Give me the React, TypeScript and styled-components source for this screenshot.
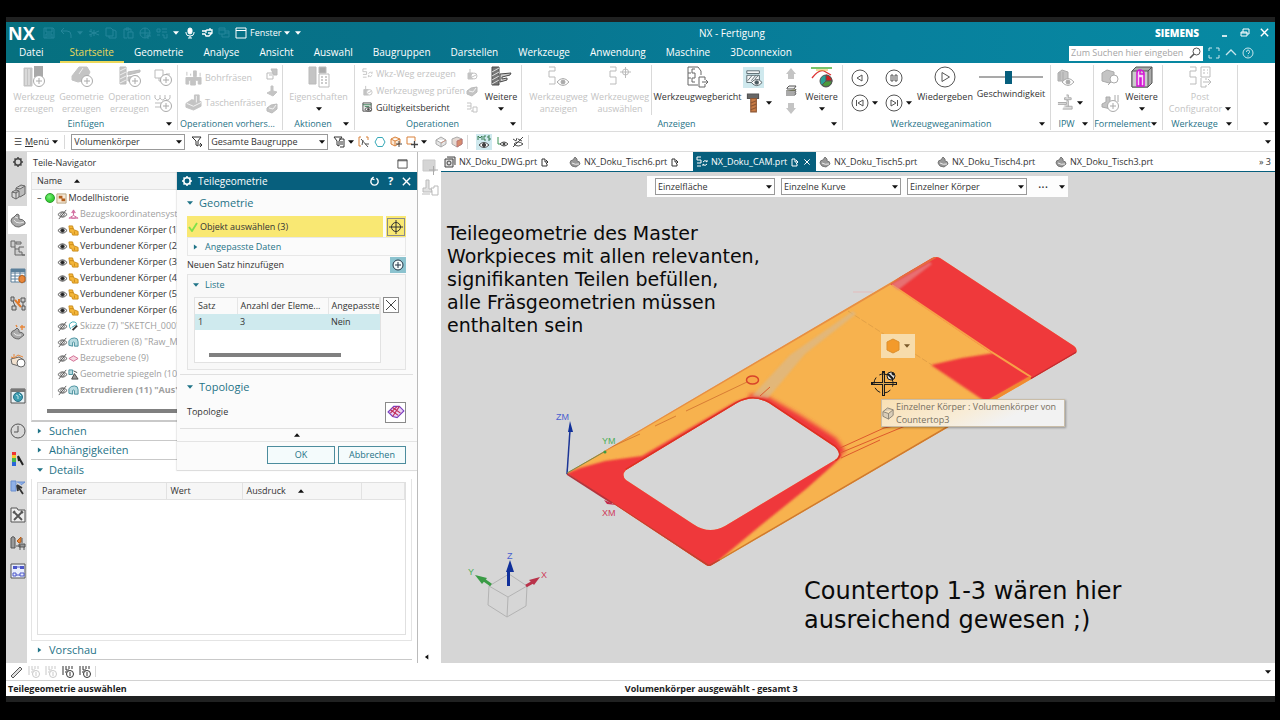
import React from "react";
import styled, { createGlobalStyle, css } from "styled-components";

const C = {
  deep: "#075f7d",
  link: "#1f7387",
  ink: "#333",
  dim: "#c3c3c3",
  line: "#d9d9d9",
};

const Global = createGlobalStyle`
  * { box-sizing: border-box; }
  body { margin: 0; background: #000; }
  button, input, select, table { font: inherit; color: inherit; }
  button { border: 0; padding: 0; margin: 0; background: none; cursor: pointer; }
`;

/* ---------- icons ---------- */

type Glyph = { box: number; art: React.ReactNode };
const plus = (x: number, y: number, c: string) => (
  <g stroke={c} fill="#fff">
    <circle cx={x} cy={y} r="5.5" />
    <path d={`M${x - 3} ${y}h6M${x} ${y - 3}v6`} />
  </g>
);
const eye = (x: number, y: number, c: string) => (
  <g stroke={c} fill="#fff">
    <path d={`M${x - 6} ${y}q6 -7 12 0q-6 7 -12 0z`} />
    <circle cx={x} cy={y} r="2" fill={c} />
  </g>
);
const D = "#c4c4c4";
const K = "#4a4a4a";

const glyphs: Record<string, Glyph> = {
  save: { box: 12, art: <path d="M1 1h9l1 1v9H1zM3 1v4h6V1M3 11V7h6v4M4 9h4" /> },
  undo: { box: 12, art: <path d="M4 1L1 4l3 3M1 4h6q4 0 4 4v3" /> },
  cut: { box: 12, art: <path d="M1 4l10 4M1 8l10-4M3 2v3M3 7v3M6 3v6" /> },
  copy: { box: 12, art: <path d="M1 1h5l2 2v6H1zM4 9v2h7V4L9 3H8" /> },
  paste: { box: 12, art: <path d="M2 2h7v3M2 2v9h3M4 1h3v2H4zM6 5h5v6H6z" /> },
  globe: { box: 12, art: <path d="M6 1a5 5 0 100 10A5 5 0 006 1zM1 6h10M6 1v10M9 7v5M7 9h5" /> },
  dots: { box: 12, art: <path d="M1 2h3v3H1zM6 2h5M6 5h5M1 8h3M6 8h2v3h3V7" /> },
  mic: { box: 12, art: <g><rect x="4" y="1" width="4" height="6" rx="2" fill="currentColor" /><path d="M2 5v1q0 3 4 3t4-3V5M6 9v2M4 11h4" /></g> },
  hand: { box: 12, art: <path strokeWidth="1.300" d="M1 4h3l2-1h5v3H7M5 6V4M11 6L8 9H5L4 7H1M9 1v2" /> },
  wins: { box: 12, art: <path d="M1 1h6v6H1zM4 7v3h7V4H7M1 3h6M7 6h4" /> },
  win: { box: 12, art: <path d="M1 1h10v10H1zM1 3.5h10" /> },
  min: { box: 12, art: <path strokeWidth="1.6" d="M3 9h5" /> },
  restore: { box: 12, art: <path d="M2 5h6v4H2zM4 5V2h6v5H8M2 6h6" /> },
  close: { box: 12, art: <path strokeWidth="1.5" d="M2 2l8 8M10 2l-8 8" /> },
  search: { box: 12, art: <g><circle cx="7.500" cy="4.500" r="3.500" /><path strokeWidth="1.6" d="M5 7l-4 4" /></g> },
  full: { box: 12, art: <path d="M1 4V1h3M8 1h3v3M11 8v3H8M4 11H1V8" /> },
  up: { box: 12, art: <path strokeWidth="1.3" d="M1 8l5-5 5 5" /> },
  help: { box: 12, art: <g><circle cx="6" cy="6" r="5" /><path d="M4.500 5q0-2 1.500-2t1.500 1.500T6 7M6 8.500v1" /></g> },
  tool: { box: 22, art: <g><path fill={D} stroke={D} d="M1 2h8v18H1z" /><path fill="#a9a9a9" stroke="none" d="M11 0h9v11h-9z" /><path stroke="#eee" d="M3 3v16M6 3v16" />{plus(16, 15, "#aaa")}</g> },
  geom: { box: 22, art: <g stroke={D}><path fill={D} d="M1 10L8 1h8l3 5-4 8-8 2-6-2z" /><path stroke="#eee" d="M8 8l4-6" />{plus(16, 15, "#aaa")}</g> },
  oper: { box: 22, art: <g stroke="#bbb"><path fill={D} d="M1 1h6v17H1z" /><path fill={D} d="M9 6l12-2v2L9 9zM9 11l10-1v2l-6 1v2H9z" /><path stroke="#eee" d="M1 5l6-3M1 9l6-3M1 13l6-3M1 17l6-3" />{plus(16, 15, "#aaa")}</g> },
  sqPlus: { box: 18, art: <g stroke="#bbb"><path d="M1 1h8v8H1zM5 9v3h7V5h4" />{plus(12, 11, "#aaa")}</g> },
  rowPlus: { box: 18, art: <g stroke="#bbb"><path d="M1 4q3 4 5 0q3 4 5 0q3 4 5 0M1 9h15M1 13h6M1 1v3M6 1v3M11 1v3M16 1v3" />{plus(12, 12, "#aaa")}</g> },
  drill: { box: 18, art: <g stroke={D} fill={D}><path d="M1 9h16v7h-3v-4h-3v5H6v-5H4v4H1zM9 2h3v6H9z" /><path d="M2 3v4M6 5v2M16 4v4" /></g> },
  pocket: { box: 18, art: <g stroke={D} fill={D}><path d="M1 10l6-4 10 2v5l-8 4-8-3zM10 1h5v7l-5 2z" /><path stroke="#f4f4f4" d="M2 10l7 3 8-4M12 2v7" /></g> },
  mini1: { box: 12, art: <g stroke="#bbb"><path fill={D} d="M5 1h6v6H8z" /><path d="M1 5h6v6H1zM3 7h3" /></g> },
  mini2: { box: 12, art: <path fill={D} stroke={D} d="M5 1h2v5l4 1-4 4-6-3 4-2z" /> },
  mini3: { box: 12, art: <g stroke="#bbb"><path fill={D} d="M1 6l4-3 6-1v5l-5 4-5-2z" /><path stroke="#f2f2f2" d="M3 6l4 1 3-4" /></g> },
  props: { box: 22, art: <g stroke="#bbb"><path fill={D} d="M1 1h7v17H1z" /><path fill="#aaa" d="M11 1h7v6h-7z" /><path fill="#fff" d="M11 8h10v13H11z" /><path stroke="#999" d="M13 11h2M17 11h2M13 14h2M17 14h2M13 17h2M17 17h2" /></g> },
  path12: { box: 12, art: <path d="M5 1H1v3h4v3H1M1 10h4M7 6q2-3 4 0M11 6V4M11 8q-2 3-4 0M7 8v2" /> },
  pathBox: { box: 12, art: <path d="M1 1h4v3H1M5 4v3H1M5 9h2M7 5h4v5H7z" /> },
  check12: { box: 12, art: <g><path fill="currentColor" d="M2 5h5v6H2zM4 1v4" /><circle cx="8" cy="8" r="3" fill="#fff" /><path d="M6 9l4-2" /></g> },
  report: { box: 12, art: <g stroke={K}><path fill="#eee" d="M1 1h9v9H1z" /><path stroke="#387d53" d="M1 3h9M3 5h5" /><path fill="#fff" d="M3 8q4-4 8 0q-4 4-8 0z" /><circle cx="7" cy="8" r="1" fill={K} /></g> },
  mill: { box: 22, art: <g stroke={K}><path fill="#777" d="M2 1h7v18H2z" /><path stroke="#ddd" d="M2 6l7-4M2 10l7-4M2 14l7-4M2 18l7-4" /><path fill="#ccc" d="M10 8l11-1-1 2-8 2v2l5-1v2l-7 2z" /></g> },
  pathEye: { box: 22, art: <g stroke="#bbb"><path d="M1 1h6v4H1v6h6v7H1" />{eye(15, 16, "#aaa")}</g> },
  pathPick: { box: 22, art: <g stroke="#bbb"><path d="M1 1h6v4H1v6h6v7H1M11 6h11M16.500 1v11" /><circle cx="16.500" cy="6" r="3" /></g> },
  pathDoc: { box: 22, art: <g stroke="#666"><path d="M1 1h10l3 4v4M1 1v18h10M5 3v4h3v5H5M5 12v4h3M4 7H1M4 12H1M8 3H5" /><path fill="#fff" d="M12 11v10h6v-3M12 11h6v3M15 16h6M19 14l2 2-2 2" /></g> },
  show: { box: 20, art: <g stroke="#55656b"><path fill="#f4f7f8" d="M2 2h14v3H2z" /><path fill="#f4f7f8" d="M2 7h14v8H2z" /><path d="M3 13l5-6M7 13l5-6M11 11l4-4" />{eye(13, 15, "#4b5a60")}</g> },
  bolt: { box: 18, art: <g><path fill="#666" stroke="#555" d="M4 1h10v4H4z" /><path fill="#c87b45" stroke="#8d5632" d="M7 5h5v12H7z" /><path stroke="#8d5632" d="M7 9l5-2M7 12l5-2M7 15l5-2" /></g> },
  arrUp: { box: 12, art: <path fill={D} stroke="none" d="M6 0l5 6H9v5H3V6H1z" /> },
  arrDn: { box: 12, art: <path fill={D} stroke="none" d="M6 12L1 6h2V1h6v5h2z" /> },
  layers: { box: 12, art: <g stroke="#555"><path fill="#eee" d="M2 3l2-2h7l-2 3H2z" /><path fill="#8a8f60" d="M1 6h9l1-2" /><path d="M1 8h9l1-2M1 10h9l1-2" /></g> },
  pie: { box: 22, art: <g><path stroke="#57b545" strokeWidth="1.6" d="M0 2h21" /><path stroke="#d33" strokeWidth="1.300" d="M1 12q7-9 12-7l7 4" /><path stroke="#e3b93b" d="M5 4h12" /><circle cx="15" cy="15" r="6" fill="#2aa197" stroke="#555" /><path fill="#c22" stroke="#555" d="M15 15V9a6 6 0 016 6z" /><path fill="#4a9a3c" stroke="#555" d="M15 15h6a6 6 0 01-10 4z" /></g> },
  back: { box: 18, art: <g stroke="#555"><circle cx="9" cy="9" r="8" /><path d="M11 6v6L6 9z" /></g> },
  first: { box: 18, art: <g stroke="#555"><circle cx="9" cy="9" r="8" /><path d="M12 6v6L7 9zM5.500 6v6" /></g> },
  pause: { box: 18, art: <g stroke="#555"><circle cx="9" cy="9" r="8" /><path d="M6 6h2v6H6zM10 6h2v6h-2z" /></g> },
  last: { box: 18, art: <g stroke="#555"><circle cx="9" cy="9" r="8" /><path d="M6 6v6l5-3zM12.500 6v6" /></g> },
  play: { box: 22, art: <g stroke="#555"><circle cx="11" cy="11" r="10" /><path d="M8 6.500v9l7.500-4.500z" /></g> },
  ipw1: { box: 18, art: <g stroke="#aaa"><path fill={D} d="M1 4l4-3 6 2v9H1z" /><path d="M3 3v8M6 3v8" />{eye(11, 13, "#aaa")}</g> },
  ipw2: { box: 18, art: <path stroke="#aaa" fill="#ddd" d="M10 1h2v3h3v2H8V4h2M1 9h9v2H1M10 7h2v6h4v3H6M9 13h4" /> },
  form1: { box: 18, art: <g stroke="#aaa"><path fill={D} d="M1 4l5-3 7 2v7l-5 4-7-2z" /><circle cx="13" cy="10" r="4" fill="#fff" /><path d="M10 13l-3 3" /></g> },
  form2: { box: 18, art: <g stroke="#aaa"><path fill={D} d="M1 10l4-2V3h4v6l4 2-3 4-9-2zM14 1v7M17 1v7" />{plus(12, 12, "#aaa")}</g> },
  slot: { box: 22, art: <g stroke="#555"><path fill="#aaa" d="M1 5l4-4h16v16l-4 4H1z" /><path fill="#ccc" d="M1 5h16v16H1z" /><path d="M17 5l4-4" /><path fill="#f8d7f8" stroke="#d413d4" strokeWidth="1.500" d="M6 20V7q0-3 3-3t4 3v13h-3v-8H9v8zM9 4V8h4" /></g> },
  post: { box: 22, art: <g stroke="#bbb"><path d="M1 1h6v4H1v6h6v7H1M12 1h9v10h-9zM14 4h2M18 4h1M14 7h2M18 7h1M12 12v9h5v-2M14 16h8M19 13l3 3-3 3M17 12v2" /></g> },
  funnel: { box: 12, art: <path d="M1 1h9L7 5v5L5 9V5zM8 9h3M9 7l2 2-2 2" /> },
  funnel2: { box: 12, art: <path d="M1 1h8L6 5v5L4 9V5zM6 3h5v8H7M7 6h3M7 8h3" /> },
  snap: { box: 12, art: <g><path stroke="#d9813a" d="M3 1H1v9h2M8 1h2v3" /><path stroke="#555" d="M3 3l7 8M4 9l1-5M7 8h4" /></g> },
  hex: { box: 12, art: <path stroke="#37a9b8" d="M3.500 1.500h5L11 6l-2.500 4.500h-5L1 6z" /> },
  cubeO: { box: 12, art: <g><path stroke="#d9813a" fill="#fbe9d6" d="M1 3l4-2 5 2v4l-5 3-4-2zM1 3l4 2 5-2M5 5v5" /><path stroke="#444" d="M6 8h6M9 5v6" /></g> },
  rectO: { box: 12, art: <g><path stroke="#d9813a" d="M9 5V1H1v7h5" /><path stroke="#444" strokeWidth="1.300" d="M5 8.500h7M8.500 5v7" /></g> },
  cubeG: { box: 12, art: <g><path stroke="#aaa" fill="#e5e5e5" d="M1 4l5-3 5 3v4l-5 3-5-3zM1 4l5 3 5-3M6 7v4" /><path stroke="#c98" d="M6 7l5-3" /></g> },
  cubeR: { box: 12, art: <g><path stroke="#aaa" fill="#e5d9d2" d="M1 3l5-2 5 2v5l-5 3-5-3z" /><path fill="#d88d6d" stroke="#b77" d="M6 5l5-2v5l-5 3z" /></g> },
  mcs: { box: 14, art: <g><path stroke="#387d53" d="M1 5V1l2 2 2-2v4M9 1H7v4h2M13 1h-2v2h2v2h-2" /><path stroke={K} fill="#fff" d="M2 10q5-5 10 0q-5 5-10 0z" /><circle cx="7" cy="10" r="1.500" fill={K} /></g> },
  csEye: { box: 12, art: <g><path stroke="#3c9457" d="M2 1v7h4" /><path stroke={K} fill="#fff" d="M4 8q4-4 8 0q-4 4-8 0z" /><circle cx="8" cy="8" r="1" fill={K} /></g> },
  csOff: { box: 12, art: <path stroke={K} d="M1 11L11 1M1 3l3 2 1-3M2 8q4-4 9 0q-5 4-9 0M6 3l4 2" /> },
  gear: { box: 12, art: <g strokeWidth="1.500"><circle cx="6" cy="6" r="3.200" /><path strokeWidth="1.500" d="M6 1v2M6 9v2M1 6h2M9 6h2M2.500 2.500l1 1M8.500 8.500l1 1M9.500 2.500l-1 1M3.500 8.500l-1 1" /></g> },
  asm: { box: 16, art: <g stroke="#666"><path fill="#bbb" d="M6 4l5-3 4 1v8l-5 3-4-2z" /><path fill="#d6d6d6" d="M2 8l4-2 3 1v6l-3 2-4-2zM2 8l4 1 3-2M6 9v6M6 4l4 1 5-3" /></g> },
  part: { box: 16, art: <g stroke="#666"><path fill="#a9a9a9" d="M1 9q0-3 3-4l3-3 2 1v4q4 0 6 3v2l-6 3q-6 0-8-6z" /><path stroke="#e6e6e6" d="M4 8q1 3 6 3l4-1M5 5l3 1" /></g> },
  opnav: { box: 16, art: <path stroke="#666" fill="#ccc" d="M1 1h4v6H1zM6 2h5v2H6zM5 9h4v3h3v3h3M5 7v8h10M9 9V7h5" /> },
  tableO: { box: 16, art: <g><path fill="#fff" stroke="#5a7f9a" d="M1 1h14v13H1zM1 5h14M1 8h14M1 11h14M5 1v13M10 1v13" /><path fill="#5a7f9a" stroke="none" d="M1 1h14v3H1z" /><path fill="#e8873a" stroke="#b35f1d" d="M9 9l3-2 3 2v4l-3 2-3-2z" /></g> },
  links: { box: 16, art: <g stroke="#555"><path fill="#ccc" d="M1 1h3v4H1zM2 10h4v4H2zM11 2h4v4h-4zM12 10h3v4h-3zM3 5l2 5M13 6v4" /><path stroke="#e27a2a" strokeWidth="2" d="M5 4l6 7M9 3v4" /></g> },
  partStar: { box: 16, art: <g stroke="#666"><path fill="#a9a9a9" d="M1 10q0-3 4-4l2-2 2 2v2q4 0 5 3l-5 4q-6 0-8-5z" /><path stroke="#eee" d="M4 9q1 3 7 2" /><path stroke="#e8873a" strokeWidth="1.400" d="M10 3h5M12 1v5M6 1l1 2" /></g> },
  cubeStar: { box: 16, art: <g stroke="#666"><path fill="#f3e2cf" d="M1 7l8-2 5 3-5 6-7-2z" /><path stroke="#e8873a" d="M1 5l3 1 4-3 5 2M4 2v3" /><circle cx="11" cy="11" r="4" fill="#fff" /></g> },
  web: { box: 16, art: <g><path fill="#e8f1f4" stroke="#555" d="M1 1h14v14H1z" /><path fill="#777" stroke="none" d="M1 1h14v3H1z" /><circle cx="8" cy="9" r="4.500" fill="#3c9db1" stroke="#2a6f86" /><path stroke="#bfe3e8" d="M6 7l2 1v3M9 6l2 2" /></g> },
  clock: { box: 16, art: <g stroke="#555"><circle cx="8" cy="8" r="7" /><path d="M8 3v6H4" /></g> },
  ramp: { box: 16, art: <g stroke="none"><path fill="#e33" d="M2 1h4v3H2z" /><path fill="#f5c52d" d="M2 4h4v3H2z" /><path fill="#46b84a" d="M2 7h4v4H2z" /><path fill="#2a66d8" d="M2 11h4v4H2z" /><path stroke="#222" strokeWidth="2" d="M8 5l5 9M8 5l1 5" /></g> },
  blue: { box: 16, art: <g><path fill="#8fb0e6" stroke="#6b8fd0" d="M1 2h5v10H1zM7 3h8l-4 3" /><path stroke="#333" strokeWidth="1.800" d="M7 6l6 9M7 6l1 6M7 6l5 3" /></g> },
  wrench: { box: 16, art: <g stroke="#555"><path fill="#eee" d="M1 1h6l1 2h7v12H1z" /><path strokeWidth="1.800" d="M4 5l8 8M12 5l-8 8M3 6l2-2M11 4l2 2" /></g> },
  plant: { box: 16, art: <g stroke="#555"><path fill="#999" d="M1 3q2-3 4 0v10H1zM9 9h6v3H9zM10 12v3M14 12v3" /><path fill="#e8873a" stroke="#b35f1d" d="M7 6l4-4v5l-2 1z" /><path d="M6 11h5M12 3v5" /></g> },
  flow: { box: 16, art: <g><path fill="#e9eefc" stroke="#555" d="M1 1h14v14H1z" /><path fill="#4c57c9" stroke="none" d="M3 3h4v3H3zM10 3h4v3h-4z" /><path stroke="#4c57c9" d="M7 4h3M3 10h3v3H3zM6 12h4M10 10h4v3h-4z" /></g> },
  eyeOn: { box: 12, art: <g stroke="#444"><path d="M1 6q5-6 10 0q-5 6-10 0z" /><circle cx="6" cy="6" r="2" fill="#222" /></g> },
  eyeOff: { box: 12, art: <g stroke="#555"><path d="M1 6q5-6 10 0q-5 6-10 0z" /><circle cx="6" cy="6" r="2" /><path d="M2 11l8-10" /></g> },
  csys: { box: 12, art: <path stroke="#d0669a" d="M6 1v6L1 10h10L6 7M6 1L4 4h4zM4 8v2h4V8" /> },
  joined: { box: 12, art: <g stroke="#c98a17"><path fill="#f5b73a" d="M1 1h4l1 4 5 2v4H5L4 8H2z" /><path d="M2 4h4M7 7v3" /></g> },
  sketch: { box: 12, art: <g><path stroke="#2aa3b0" d="M3 9Q-1 3 5 1q5 0 4 3L4 7" /><path stroke="#333" strokeWidth="2" d="M10 5l-5 5" /></g> },
  extrude: { box: 12, art: <path stroke="#3f8b99" fill="#b8dbe1" d="M1 9V4q2-3 6-3t4 4v5H7V6Q6 5 5 6v4z" /> },
  plane: { box: 12, art: <path stroke="#d0668c" fill="#f6d5e0" d="M1 6l5-3 5 3-5 3z" /> },
  mirror: { box: 12, art: <g><path stroke="#3f8b99" fill="#b8dbe1" d="M1 1h4v5H1z" /><path stroke="#444" fill="#999" d="M4 11l3-6 4 6zM6 2l4 2" /></g> },
  history: { box: 12, art: <g><path stroke="#b5a07b" fill="#f6e9d7" d="M1 1h10v10H1z" /><path stroke="none" fill="#b35f1d" d="M3 3h4v3H3zM6 6h4v3H6z" /></g> },
  refresh: { box: 12, art: <path strokeWidth="1.500" d="M4 2.500a4 4 0 104 0M5 1L3 3l3 1" /> },
  target: { box: 16, art: <g><circle cx="8" cy="8" r="4.500" /><path d="M8 1v14M1 8h14" /></g> },
  addRing: { box: 14, art: <g stroke="#234"><circle cx="7" cy="7" r="5" fill="#f5fbfc" /><path d="M7 4v6M4 7h6" /></g> },
  cross: { box: 14, art: <path stroke="#444" d="M2 2l10 10M12 2L2 12" /> },
  tick: { box: 10, art: <path stroke="#7ee04a" strokeWidth="1.800" d="M1 5l3 4 5-8" /> },
  topo: { box: 16, art: <g><path fill="#e9d3f5" stroke="#7b3fc0" d="M1 8l5-5h5l4 4-6 6-4-1z" /><path stroke="#c02b55" d="M3 6l7 5M5 4l7 5M5 12l6-9M3 9l6-6" /></g> },
  maxi: { box: 12, art: <path stroke={K} d="M1 2h10v9H1zM1 3h10" /> },
  drawTab: { box: 12, art: <g stroke="#444"><path fill="#ddd" d="M1 3h8v8H1zM3 1h8v8" /><circle cx="5" cy="7" r="2" /></g> },
  partTab: { box: 12, art: <g stroke="#777"><path fill="#999" d="M1 7q0-3 3-3l2-3 2 2v2q3 0 3 3l-4 3Q2 11 1 7z" /><path stroke="#eee" d="M3 7q3 2 7 1" /></g> },
  mark: { box: 10, art: <path d="M5 2H2v7h5V7M5 2v3h3M6 3l2 2-2 2" /> },
  ghostA: { box: 18, art: <g stroke="#c9c9c9"><path fill="#d5d5d5" d="M2 2h12v11H2z" /><path stroke="#aaa" d="M8 12h9M12.500 8v9" /></g> },
  ghostB: { box: 18, art: <g fill="#e2e2e2" stroke="#bbb"><path d="M5 1h3v9h3v3H2V9h3zM1 15h8" /><path fill="#fff" d="M10 9h3v-2h4v9h-6v-4z" /></g> },
  ruler: { box: 14, art: <path stroke="#555" fill="#ddd" d="M1 11l9-9 2 2-9 9z" /> },
  rec: { box: 14, art: <g><path d="M2 1v9M5 1v4M8 1v3M11 1v3M5 5h3M4 7h2" /><circle cx="9" cy="9" r="3.500" fill="#fff" /><path d="M9 7v4" /></g> },
  bodyOrange: { box: 16, art: <path fill="#f39a2b" stroke="#dd8f2c" d="M2 4l6-3 6 3v8l-6 3-6-3z" /> },
  bodyGrey: { box: 14, art: <path fill="#d9cdb8" stroke="#8a8375" d="M1 5l5-4 6 2v6l-5 4-6-3zM1 5l6 2 5-4M7 7v6" /> },
};

const Svg = styled.svg`
  display: block;
  flex: none;
  fill: none;
  stroke: currentColor;
`;
const Icon = ({ n, size }: { n: string; size?: number }) => {
  const g = glyphs[n];
  const s = size ?? g.box;
  return (
    <Svg width={s} height={s} viewBox={`0 0 ${g.box} ${g.box}`} aria-hidden="true">
      {g.art}
    </Svg>
  );
};

const shapes = { down: "M0 1h7L3.500 5z", up: "M0 5h7L3.500 1z", right: "M1 0v6l4-3z", left: "M5 0v6L1 3z" };
const Caret = ({ dir = "down", tone = "#111" }: { dir?: keyof typeof shapes; tone?: string }) => (
  <Svg width="6" height="6" viewBox="0 0 7 6" aria-hidden="true">
    <path d={shapes[dir]} fill={tone} stroke="none" />
  </Svg>
);

/* ---------- frame ---------- */

const Page = styled.div`
  min-height: 100vh;
  display: flex;
  flex-direction: column;
  padding: 17px 5px 18px 6px;
  font: 9px/12px "Open Sans", "Noto Sans", sans-serif;
  color: ${C.ink};
`;
const Strip = styled.div<{ $h: number }>`
  height: ${(p) => p.$h}px;
  background: #202121;
`;
const Shell = styled.div`
  flex: 1;
  display: flex;
  flex-direction: column;
  background: #fff;
`;
const Header = styled.header`
  background: linear-gradient(90deg, #06707f 0%, #07728a 30%, #08809d 70%, #078aa3 100%);
  color: #fff;
`;
const TitleBar = styled.div`
  display: flex;
  align-items: center;
  height: 21px;
`;
const Quick = styled.div`
  display: flex;
  align-items: center;
  width: 303px;
  gap: 5px;
`;
const Brand = styled.strong`
  width: 32px;
  padding-left: 2px;
  font-size: 18px;
  line-height: 20px;
`;
const QuickButton = styled.button<{ $faint?: boolean }>`
  display: flex;
  align-items: center;
  gap: 3px;
  color: ${(p) => (p.$faint ? "#25869a" : "#fff")};
`;
const TitleText = styled.div`
  flex: 1;
  text-align: center;
  font-size: 10px;
`;
const WindowTools = styled.div`
  display: flex;
  align-items: center;
  gap: 8px;
  width: 120px;
  padding-right: 5px;
`;
const Siemens = styled.strong`
  flex: 1;
  font-size: 10px;
  font-weight: 800;
`;
const TabBar = styled.nav`
  display: flex;
  align-items: stretch;
  height: 20px;
  padding-left: 3px;
`;
const Tab = styled.a<{ $on?: boolean; $wide?: boolean }>`
  padding: 3px 10px 0;
  margin-right: ${(p) => (p.$wide ? 6 : 0)}px;
  font-size: 10px;
  line-height: 13px;
  text-decoration: none;
  color: ${(p) => (p.$on ? "#ecd85a" : "#fff")};
  border-bottom: 2px solid ${(p) => (p.$on ? "#ecd85a" : "transparent")};
`;
const SearchArea = styled.div`
  display: flex;
  align-items: center;
  gap: 5px;
  margin-left: auto;
  padding-right: 21px;
  color: #c9e6ec;
`;
const SearchBox = styled.label`
  display: flex;
  align-items: center;
  width: 134px;
  height: 15px;
  padding: 0 2px;
  background: #fff;
  color: #555;
  input {
    flex: 1;
    min-width: 0;
    border: 0;
    padding: 0;
    outline: 0;
    background: none;
  }
  input::placeholder { color: #a5a5a5; }
`;

/* ---------- ribbon ---------- */

const Ribbon = styled.div`
  display: flex;
  height: 69px;
  padding-top: 2px;
  border-bottom: 1px solid #dcdcdc;
`;
const GroupBox = styled.section<{ $w?: number }>`
  flex: ${(p) => (p.$w ? `0 0 ${p.$w}px` : "1 1 0")};
  display: flex;
  flex-direction: column;
  margin-bottom: 1px;
  border-right: 1px solid ${(p) => (p.$w ? C.line : "transparent")};
`;
const GroupBody = styled.div<{ $pad?: number }>`
  flex: 1;
  display: flex;
  padding-left: ${(p) => p.$pad ?? 0}px;
`;
const GroupFoot = styled.div`
  display: flex;
  align-items: center;
  height: 12px;
  padding-right: 5px;
  color: ${C.link};
  white-space: nowrap;
  span { flex: 1; text-align: center; }
`;
const Group = ({ w, pad, label, arrow = true, children }: { w?: number; pad?: number; label?: string; arrow?: boolean; children?: React.ReactNode }) => (
  <GroupBox $w={w}>
    <GroupBody $pad={pad}>{children}</GroupBody>
    <GroupFoot>
      <span>{label}</span>
      {arrow && <Caret />}
    </GroupFoot>
  </GroupBox>
);
const Big = styled.button<{ $w: number; $off?: boolean }>`
  flex: 0 0 ${(p) => p.$w}px;
  width: ${(p) => p.$w}px;
  display: flex;
  flex-direction: column;
  align-items: center;
  align-self: flex-start;
  gap: 3px;
  padding-top: 1px;
  white-space: nowrap;
  color: ${(p) => (p.$off ? C.dim : C.ink)};
`;
const WithCaret = styled.span`
  display: flex;
  align-items: center;
  gap: 3px;
  height: 12px;
`;
const Stack = styled.div<{ $w: number; $n: 2 | 3 }>`
  flex: 0 0 ${(p) => p.$w}px;
  display: grid;
  grid-template-rows: ${(p) => (p.$n === 2 ? "25px 25px" : "17px 17px 17px")};
  align-items: center;
`;
const Small = styled.button<{ $off?: boolean }>`
  display: flex;
  align-items: center;
  gap: 3px;
  height: 17px;
  white-space: nowrap;
  color: ${(p) => (p.$off ? C.dim : C.ink)};
`;
const Lit = styled.span<{ $s: number }>`
  display: grid;
  place-items: center;
  width: ${(p) => p.$s}px;
  height: ${(p) => p.$s}px;
  background: #cfe9ee;
`;
const Rule = styled.i<{ $h: number }>`
  width: 1px;
  height: ${(p) => p.$h}px;
  background: ${C.line};
`;
const Speed = styled.label`
  display: flex;
  flex-direction: column;
  align-items: center;
  gap: 4px;
  width: 74px;
  padding-top: 5px;
  input {
    appearance: none;
    width: 64px;
    height: 14px;
    margin: 0;
    background: linear-gradient(#a9a9a9, #a9a9a9) center / 100% 2px no-repeat;
  }
  input::-webkit-slider-thumb {
    appearance: none;
    width: 7px;
    height: 13px;
    background: ${C.deep};
  }
`;

/* ---------- selection bar ---------- */

const SelectBar = styled.div`
  display: flex;
  align-items: center;
  height: 20px;
  padding: 0 4px 0 8px;
  border-bottom: 1px solid #dcdcdc;
`;
const Tools = styled.div<{ $gap: number; $l?: number }>`
  display: flex;
  align-items: center;
  gap: ${(p) => p.$gap}px;
  margin-left: ${(p) => p.$l ?? 0}px;
  button { display: flex; align-items: center; gap: 3px; }
`;
const Pick = styled.span<{ $w: number; $h: number }>`
  display: grid;
  align-items: center;
  width: ${(p) => p.$w}px;
  select {
    grid-area: 1 / 1;
    appearance: none;
    width: 100%;
    height: ${(p) => p.$h}px;
    padding: 0 2px;
    border: 1px solid #999;
    border-radius: 0;
    background: #fff;
    line-height: 12px;
  }
  svg { grid-area: 1 / 1; justify-self: end; margin-right: 3px; pointer-events: none; }
`;
const Dropdown = ({ w, h = 16, value, label }: { w: number; h?: number; value: string; label: string }) => (
  <Pick $w={w} $h={h}>
    <select aria-label={label} defaultValue={value}>
      <option>{value}</option>
    </select>
    <Caret />
  </Pick>
);
const Push = styled.i`
  margin-left: auto;
`;

/* ---------- work area ---------- */

const Work = styled.main`
  flex: 1;
  display: flex;
  align-items: stretch;
`;
const Rail = styled.nav`
  flex: 0 0 21px;
  background: #d8d8d8;
  color: #444;
`;
const RailButton = styled.button<{ $on?: boolean; $gap?: number; $h?: number }>`
  display: grid;
  place-items: center;
  width: 19px;
  height: ${(p) => p.$h ?? 28}px;
  margin: ${(p) => p.$gap ?? 0}px 0 0 2px;
  background: ${(p) => (p.$on ? "#fff" : "none")};
`;
const Navigator = styled.aside`
  position: relative;
  flex: 0 0 391px;
  display: flex;
  flex-direction: column;
  padding: 0 5px 3px 4px;
  border-right: 1px solid #bbb;
`;
const NavTitle = styled.h2`
  display: flex;
  justify-content: space-between;
  align-items: center;
  height: 20px;
  margin: 0;
  padding: 2px 4px 0 2px;
  font-size: 9px;
  font-weight: 400;
`;
const TreeHead = styled.div`
  display: flex;
  align-items: center;
  gap: 12px;
  height: 18px;
  padding-left: 5px;
  background: #f5f5f5;
  border: 1px solid #e2e2e2;
`;
const Tree = styled.ul`
  margin: 0;
  padding: 0 0 0 5px;
  list-style: none;
  border-left: 1px solid #e2e2e2;
`;
const TreeRow = styled.li<{ $root?: boolean; $off?: boolean; $bold?: boolean }>`
  display: flex;
  align-items: center;
  gap: ${(p) => (p.$root ? 1 : 0)}px;
  height: 16px;
  width: 140px;
  margin-left: ${(p) => (p.$root ? 0 : 15)}px;
  padding-left: ${(p) => (p.$root ? 0 : 4)}px;
  border-left: ${(p) => (p.$root ? "0" : "1px solid #ddd")};
  overflow: hidden;
  white-space: nowrap;
  color: ${(p) => (p.$off ? "#a0a0a0" : C.ink)};
  font-weight: ${(p) => (p.$bold ? 700 : 400)};
  span { margin-left: 1px; }
`;
const Ball = styled.i`
  width: 10px;
  height: 10px;
  margin-left: 2px;
  border-radius: 50%;
  background: radial-gradient(circle at 40% 35%, #7df07d, #35cf35 60%);
  border: 1px solid #2b9a2b;
`;
const HScroll = styled.div`
  height: 24px;
  padding: 11px 0 0 15px;
  border-left: 1px solid #e2e2e2;
  border-bottom: 2px solid #c9c9c9;
  i { display: block; width: 340px; height: 4px; background: #808080; }
`;
const Fold = styled.button<{ $line?: boolean; $pad?: number; $h?: number }>`
  display: flex;
  align-items: center;
  gap: 6px;
  height: ${(p) => p.$h ?? 19}px;
  padding-left: ${(p) => p.$pad ?? 6}px;
  border-bottom: ${(p) => (p.$line ? "1px solid #c9c9c9" : "0")};
  font-size: 11px;
  line-height: 14px;
  color: ${C.link};
  text-align: left;
`;
const DetailBox = styled.div`
  flex: 1;
  display: flex;
  padding: 3px 5px 5px;
  border: 1px solid #e4e4e4;
  border-top: 0;
`;
const DetailFrame = styled.div`
  flex: 1;
  border: 1px solid #e0e0e0;
`;
const DetailTable = styled.table`
  width: 100%;
  border-collapse: collapse;
  table-layout: fixed;
  th {
    height: 16px;
    padding: 0 4px;
    text-align: left;
    font-weight: 400;
    background: #f6f6f6;
    border-right: 1px solid #e2e2e2;
    border-bottom: 1px solid #e2e2e2;
  }
  svg { display: inline; margin-left: 12px; }
`;

/* ---------- dialog ---------- */

const Dialog = styled.section`
  position: absolute;
  top: 20px;
  right: 0;
  width: 240px;
  background: #fbfbfb;
  border-bottom: 1px solid #ddd;
  box-shadow: -1px 0 1px rgba(0, 0, 0, 0.08);
`;
const DialogTitle = styled.header`
  display: flex;
  align-items: center;
  gap: 5px;
  height: 18px;
  padding: 0 5px 0 4px;
  background: ${C.deep};
  color: #fff;
  font-size: 10px;
  h2 { flex: 1; margin: 0; font-size: 10px; font-weight: 400; }
  button { width: 11px; font-weight: 700; font-size: 11px; }
`;
const DialogBody = styled.div<{ $b: number }>`
  display: flex;
  flex-direction: column;
  margin: 0 4px 0 3px;
  padding: 0 7px ${(p) => p.$b}px;
  border-bottom: 1px solid #e0e0e0;
`;
const Chosen = styled.div`
  display: flex;
  gap: 3px;
  height: 21px;
  div { flex: 1; display: flex; align-items: center; gap: 2px; padding-left: 1px; background: #f9e873; }
`;
const SquareButton = styled.button<{ $s: number; $bg?: string; $bd?: string }>`
  display: grid;
  place-items: center;
  width: ${(p) => p.$s}px;
  height: ${(p) => p.$s}px;
  background: ${(p) => p.$bg ?? "#fff"};
  border: 1px solid ${(p) => p.$bd ?? "#8a8a8a"};
`;
const ChosenEnd = styled.span`
  display: grid;
  place-items: center;
  width: 20px;
  background: #f9e873;
`;
const Sub = styled.button<{ $boxed?: boolean }>`
  display: flex;
  align-items: center;
  gap: 6px;
  height: 19px;
  padding-left: 5px;
  color: ${C.link};
  border: ${(p) => (p.$boxed ? "1px solid #e8e8e8" : "0")};
`;
const Line = styled.div<{ $h: number }>`
  display: flex;
  align-items: center;
  justify-content: space-between;
  height: ${(p) => p.$h}px;
`;
const ListBox = styled.div`
  display: flex;
  flex-direction: column;
  height: 96px;
  border: 1px solid #e4e4e4;
  background: #f8f8f8;
`;
const ListRow = styled.div`
  display: flex;
  gap: 2px;
  padding: 3px 6px;
`;
const ListFrame = styled.div`
  width: 188px;
  height: 66px;
  border: 1px solid #e2e2e2;
  background: #fff;
  overflow: hidden;
  i { display: block; width: 132px; height: 4px; margin: 23px 0 0 14px; background: #808080; }
`;
const SetTable = styled.table`
  width: 100%;
  table-layout: fixed;
  border-collapse: collapse;
  th, td { height: 16px; padding: 0 3px; text-align: left; font-weight: 400; white-space: nowrap; overflow: hidden; }
  th { background: #fafafa; border-right: 1px solid #e6e6e6; }
  td { background: #cfeaee; }
`;
const Expander = styled.div`
  display: grid;
  place-items: center;
  height: 12px;
`;
const Footer = styled.footer`
  display: flex;
  justify-content: flex-end;
  gap: 3px;
  padding: 4px 11px 6px;
  border-top: 1px solid #e4e4e4;
`;
const Action = styled.button`
  width: 68px;
  height: 18px;
  border: 1px solid #4c8c9d;
  background: #f4fbfc;
  color: ${C.link};
`;

/* ---------- graphics window ---------- */

const Gutter = styled.div`
  flex: 0 0 23px;
  display: flex;
  flex-direction: column;
  align-items: center;
  gap: 3px;
  padding: 6px 0 3px;
  color: #aaa;
`;
const Bottom = styled.i`
  margin-top: auto;
  margin-right: 6px;
`;
const Graphics = styled.section`
  flex: 1;
  min-width: 0;
  display: flex;
  flex-direction: column;
`;
const DocTabs = styled.div`
  display: flex;
  align-items: center;
  height: 20px;
  border-bottom: 1px solid ${C.deep};
`;
const DocTab = styled.button<{ $w: number; $on?: boolean }>`
  flex: 0 0 ${(p) => p.$w}px;
  display: flex;
  align-items: center;
  gap: 3px;
  height: 19px;
  padding-left: 3px;
  white-space: nowrap;
  background: ${(p) => (p.$on ? C.deep : "none")};
  color: ${(p) => (p.$on ? "#fff" : C.ink)};
`;
const Canvas = styled.div`
  position: relative;
  flex: 1;
  overflow: hidden;
  background: #d6d6d6;
`;
const Scene = styled.svg`
  position: absolute;
  left: 0;
  top: 0;
  font: 9px "Liberation Sans", sans-serif;
`;
const FilterBar = styled.div`
  position: absolute;
  left: 206px;
  top: 4px;
  display: flex;
  align-items: center;
  gap: 6px;
  height: 21px;
  padding: 0 3px 0 8px;
  background: #fdfdfd;
`;
const More = styled.button`
  width: 20px;
  font-size: 13px;
`;
const Note = styled.p<{ $x: number; $y: number; $big?: boolean }>`
  position: absolute;
  left: ${(p) => p.$x}px;
  top: ${(p) => p.$y}px;
  margin: 0;
  color: #0a0a0a;
  white-space: nowrap;
  font: ${(p) => (p.$big ? "24px/29px" : "19px/23px")} "DejaVu Sans", sans-serif;
`;
const pinned = css<{ $x: number; $y: number }>`
  position: absolute;
  left: ${(p) => p.$x}px;
  top: ${(p) => p.$y}px;
  display: flex;
  align-items: center;
`;
const Chip = styled.button<{ $x: number; $y: number }>`
  ${pinned}
  gap: 3px;
  width: 34px;
  height: 24px;
  padding-left: 4px;
  background: #f7dcab;
`;
const Tip = styled.div<{ $x: number; $y: number }>`
  ${pinned}
  gap: 1px;
  width: 184px;
  height: 28px;
  line-height: 13px;
  white-space: nowrap;
  color: #776f60;
  background: linear-gradient(155deg, #f9e0b4 0%, #f8ecd6 45%, #f2f2f2 70%);
  border: 1px solid #c9bda8;
  box-shadow: 1px 1px 2px rgba(0, 0, 0, 0.3);
`;

const BottomBar = styled.div`
  display: flex;
  align-items: center;
  height: 18px;
  padding: 0 4px;
  border-bottom: 1px solid #d2d2d2;
`;
const Faded = styled.button`
  color: #c9c9c9;
`;
const Status = styled.footer`
  display: grid;
  grid-template-columns: 37fr 39fr;
  align-items: center;
  height: 15px;
  padding-left: 2px;
  font-weight: 700;
  color: #222;
`;

const tabs = ["Datei", "Startseite", "Geometrie", "Analyse", "Ansicht", "Auswahl", "Baugruppen", "Darstellen", "Werkzeuge", "Anwendung", "Maschine", "3Dconnexion"];
const quickLeft = ["save", "undo", "caret", "cut", "copy", "paste", "globe", "dots"];

type TreeNode = { eye: string; icon: string; text: string; off?: boolean; bold?: boolean };
const tree: TreeNode[] = [
  { eye: "eyeOff", icon: "csys", text: "Bezugskoordinatensystem", off: true },
  ...[1, 2, 3, 4, 5, 6].map((n) => ({ eye: "eyeOn", icon: "joined", text: `Verbundener Körper (${n})` })),
  { eye: "eyeOff", icon: "sketch", text: 'Skizze (7) "SKETCH_000"', off: true },
  { eye: "eyeOff", icon: "extrude", text: 'Extrudieren (8) "Raw_Mat"', off: true },
  { eye: "eyeOff", icon: "plane", text: "Bezugsebene (9)", off: true },
  { eye: "eyeOff", icon: "mirror", text: "Geometrie spiegeln (10)", off: true },
  { eye: "eyeOff", icon: "extrude", text: 'Extrudieren (11) "Aus"', off: true, bold: true },
];

const rail: { n: string; on?: boolean; gap?: number; h?: number }[] = [
  { n: "gear", h: 19 }, { n: "asm", gap: 7 }, { n: "part", on: true }, { n: "opnav" }, { n: "tableO" }, { n: "links" },
  { n: "partStar" }, { n: "cubeStar" }, { n: "web", gap: 8 }, { n: "clock", gap: 7 }, { n: "ramp" }, { n: "blue" },
  { n: "wrench" }, { n: "plant" }, { n: "flow" },
];

const Model = () => (
  <Scene width="834" height="492" viewBox="441 172 834 492" aria-label="Modellansicht">
    <defs>
      <clipPath id="plate">
        <path
          clipRule="evenodd"
          d="M567 473L932 258q4-2 8 0L1074 346q4 3 2 7L712 565q-3 2-6 0zM626 470Q621 475 626 480L693 524Q709 535 725 526L835 460Q843 455 835 447L769 403Q753 394 737 403z"
        />
      </clipPath>
      <filter id="soft" x="-10%" y="-10%" width="120%" height="120%"><feGaussianBlur stdDeviation="2" /></filter>
      <filter id="faint" x="-10%" y="-10%" width="120%" height="120%"><feGaussianBlur stdDeviation="1" /></filter>
    </defs>
    <g clipPath="url(#plate)">
      <path fill="#f7b24e" d="M560 250h520v320H560z" />
      <g fill="#ef393b">
        <path d="M890 284L936 250L1090 345L1031 379L990 352z" />
        <path filter="url(#faint)" d="M931 365L962 358L994 353L1031 376L986 402z" />
        <path filter="url(#faint)" d="M555 478L580 468L605 461L642 456L735 402L752 396L742 410L690 480L720 510L838 448L842 456L832 466L806 489L760 526L712 566L706 580z" />
        <path filter="url(#soft)" d="M748 394L765 395L800 415L836 438L846 452L836 456L790 424L755 404z" />
      </g>
      <path fill="none" stroke="#dc3024" strokeWidth="3" d="M626 470L737 403Q753 394 769 403L835 447Q843 455 835 460" />
      <path fill="none" stroke="#f7a148" strokeWidth="2" d="M892 285L990 351L1031 377" />
      <path stroke="#d99a45" fill="none" d="M848 311L932 365" strokeDasharray="6 2" opacity=".7" />
      <path filter="url(#faint)" fill="#d9b98c" d="M752 396L790 355L853 311L856 314L805 354L768 398z" opacity=".7" />
      <path filter="url(#faint)" fill="#e4888a" d="M891 284L930 262L932 264L898 290z" opacity=".7" />
      <path fill="none" stroke="#c2422f" strokeWidth="2" d="M567 474L709 566L720 560" />
      <path fill="none" stroke="#cf7a2f" strokeWidth="2" d="M720 560L985 405" />
      <path fill="none" stroke="#f08a30" strokeWidth="4" d="M983 405L1031 378" />
      <path fill="none" stroke="#c22a33" strokeWidth="2" d="M1031 379L1077 352" />
      <path fill="none" stroke="#e07f3e" strokeWidth="2" d="M567 473L936 257" opacity=".7" />
      <path stroke="#cf6f2e" fill="none" d="M747 382L686 411M676 416L655 426M640 434L600 452" opacity=".8" />
      <path stroke="#dd5a2c" fill="none" d="M840 448L884 428L905 424M840 453L910 424M841 458L880 440M760 396l10-9" />
      <ellipse cx="752.500" cy="380" rx="6" ry="4" fill="#f7a848" stroke="#d8432a" strokeWidth="1.500" />
    </g>
    <path stroke="#e3bcbc" d="M853 292h20" />

    <g strokeWidth="1.500" fill="none">
      <path stroke="#1b3596" d="M567 474L570 430" />
      <path fill="#10309a" stroke="none" d="M570 421l3 11h-5z" />
      <path stroke="#b4323c" d="M567 474L612 503" />
      <path fill="#c22a4a" stroke="none" d="M604 500l12 5-9-1z" />
      <path stroke="#7a8d4c" strokeWidth="1" d="M567 473L604 452" />
      <circle cx="605" cy="452" r="1.500" fill="#3a9b45" />
    </g>
    <text x="556" y="420" fill="#4a5fd0">ZM</text>
    <text x="602" y="444" fill="#4fae58">YM</text>
    <text x="602" y="516" fill="#cf3d5c">XM</text>

    <g fill="none" stroke="#b3b3b3">
      <path d="M489 586L509 574L527 586L508 597zM489 586L488 605L507 617L526 606L527 586M508 597L507 617" />
    </g>
    <path stroke="#10309a" strokeWidth="3" d="M508.500 586V570" />
    <path fill="#10309a" d="M510 560l4 12h-8z" />
    <path stroke="#3a9b45" strokeWidth="3" d="M491 585L484 580" />
    <path fill="#3a9b45" d="M475 575l12 3-5 6z" />
    <path stroke="#b9324a" strokeWidth="3" d="M526 586L533 582" />
    <path fill="#b9324a" d="M540 577l-6 8-5-5z" />
    <text x="507" y="559" fill="#4a5fd0">Z</text>
    <text x="468" y="575" fill="#4fae58">Y</text>
    <text x="541" y="578" fill="#cf3d5c">X</text>

    <g fill="none" stroke="#1a1a1a">
      <path strokeWidth="3" d="M883.500 371V396M871 383.500H897" />
      <path stroke="#d9a450" d="M883.500 373V395M873 383.500H896" />
      <path strokeDasharray="7 4" d="M883.500 374a9.500 9.500 0 110 19 9.500 9.500 0 010-19z" />
      <circle cx="891" cy="376" r="4" fill="#ddd" />
      <path strokeWidth="2" d="M888 374l5 5M892 373l2 2" />
    </g>
  </Scene>
);

export default function App() {
  return (
    <Page>
      <Global />
      <Strip $h={5} />
      <Shell>
        <Header>
          <TitleBar>
            <Quick>
              <Brand>NX</Brand>
              {quickLeft.map((n) =>
                n === "caret" ? (
                  <Caret key={n} tone="#25869a" />
                ) : (
                  <QuickButton key={n} $faint aria-label={n}><Icon n={n} /></QuickButton>
                )
              )}
              <Caret tone="#fff" />
              <QuickButton aria-label="Sprache"><Icon n="mic" /></QuickButton>
              <QuickButton aria-label="Touch"><Icon n="hand" /></QuickButton>
              <QuickButton $faint aria-label="Fenster wechseln"><Icon n="wins" /></QuickButton>
              <QuickButton><Icon n="win" />Fenster<Caret tone="#fff" /></QuickButton>
              <QuickButton aria-label="Anpassen"><Caret tone="#fff" /></QuickButton>
            </Quick>
            <TitleText>NX - Fertigung</TitleText>
            <WindowTools>
              <Siemens>SIEMENS</Siemens>
              <QuickButton aria-label="Minimieren"><Icon n="min" /></QuickButton>
              <QuickButton aria-label="Wiederherstellen"><Icon n="restore" /></QuickButton>
              <QuickButton aria-label="Schließen"><Icon n="close" size={11} /></QuickButton>
            </WindowTools>
          </TitleBar>
          <TabBar>
            {tabs.map((t, i) => (
              <Tab key={t} href="#" $on={i === 1} $wide={i === 0}>{t}</Tab>
            ))}
            <SearchArea>
              <SearchBox>
                <input placeholder="Zum Suchen hier eingeben" aria-label="Suchen" />
                <Icon n="search" />
              </SearchBox>
              <Icon n="full" />
              <Icon n="up" />
              <Icon n="help" />
            </SearchArea>
          </TabBar>
        </Header>

        <Ribbon>
          <Group w={172} pad={4} label="Einfügen">
            <Big $w={48} $off><Icon n="tool" /><span>Werkzeug<br />erzeugen</span></Big>
            <Big $w={47} $off><Icon n="geom" /><span>Geometrie<br />erzeugen</span></Big>
            <Big $w={49} $off><Icon n="oper" /><span>Operation<br />erzeugen</span></Big>
            <Stack $w={20} $n={2}>
              <Small $off aria-label="Satz"><Icon n="sqPlus" /></Small>
              <Small $off aria-label="Reihe"><Icon n="rowPlus" /></Small>
            </Stack>
          </Group>
          <Group w={105} pad={7} label="Operationen vorhers..." arrow={false}>
            <Stack $w={81} $n={2}>
              <Small $off><Icon n="drill" size={17} />Bohrfräsen</Small>
              <Small $off><Icon n="pocket" size={17} />Taschenfräsen</Small>
            </Stack>
            <Stack $w={14} $n={3}>
              <Small $off aria-label="Muster"><Icon n="mini1" /></Small>
              <Small $off aria-label="Achse"><Icon n="mini2" /></Small>
              <Small $off aria-label="Körper"><Icon n="mini3" /></Small>
            </Stack>
          </Group>
          <Group w={72} label="Aktionen">
            <Big $w={71} $off><Icon n="props" /><span>Eigenschaften</span><Caret /></Big>
          </Group>
          <Group w={167} pad={7} label="Operationen">
            <Stack $w={104} $n={3}>
              <Small $off><Icon n="path12" size={11} />Wkz-Weg erzeugen</Small>
              <Small $off><Icon n="check12" size={11} />Werkzeugweg prüfen</Small>
              <Small><Icon n="report" size={11} />Gültigkeitsbericht</Small>
            </Stack>
            <Stack $w={16} $n={3}>
              <Small $off aria-label="Prüfen"><Icon n="check12" /></Small>
              <Small $off aria-label="Vergleichen"><Icon n="mini3" /></Small>
              <Small $off aria-label="Weg"><Icon n="pathBox" /></Small>
            </Stack>
            <Big $w={38}><Icon n="mill" /><span>Weitere</span><Caret /></Big>
          </Group>
          <Group w={321} pad={6} label="Anzeigen">
            <Big $w={61} $off><Icon n="pathEye" /><span>Werkzeugweg<br />anzeigen</span></Big>
            <Big $w={62} $off><Icon n="pathPick" /><span>Werkzeugweg<br />auswählen</span></Big>
            <Rule $h={50} />
            <Big $w={91}><Icon n="pathDoc" /><span>Werkzeugwegbericht</span></Big>
            <Stack $w={42} $n={2}>
              <Small aria-label="Anzeige"><Lit $s={21}><Icon n="show" size={18} /></Lit></Small>
              <Small aria-label="Werkzeug"><Icon n="bolt" size={20} /><Caret /></Small>
            </Stack>
            <Stack $w={16} $n={3}>
              <Small aria-label="Nach oben"><Icon n="arrUp" /></Small>
              <Small aria-label="Ebenen"><Icon n="layers" /></Small>
              <Small aria-label="Nach unten"><Icon n="arrDn" /></Small>
            </Stack>
            <Big $w={41}><Icon n="pie" /><span>Weitere</span><Caret /></Big>
          </Group>
          <Group w={208} pad={8} label="Werkzeugweganimation">
            <Stack $w={34} $n={2}>
              <Small aria-label="Zurück"><Icon n="back" /></Small>
              <Small aria-label="Erster Schritt"><Icon n="first" /><Caret /></Small>
            </Stack>
            <Stack $w={31} $n={2}>
              <Small aria-label="Pause"><Icon n="pause" /></Small>
              <Small aria-label="Letzter Schritt"><Icon n="last" /><Caret /></Small>
            </Stack>
            <Big $w={58}><Icon n="play" /><span>Wiedergeben</span></Big>
            <Speed>
              <input type="range" min="0" max="100" defaultValue="45" />
              Geschwindigkeit
            </Speed>
          </Group>
          <Group w={43} pad={6} label="IPW">
            <Stack $w={36} $n={2}>
              <Small $off aria-label="IPW anzeigen"><Icon n="ipw1" /></Small>
              <Small $off aria-label="IPW erzeugen"><Icon n="ipw2" size={17} /><Caret /></Small>
            </Stack>
          </Group>
          <Group w={69} pad={7} label="Formelement">
            <Stack $w={20} $n={2}>
              <Small $off aria-label="Suchen"><Icon n="form1" /></Small>
              <Small $off aria-label="Hinzufügen"><Icon n="form2" /></Small>
            </Stack>
            <Big $w={41}><Icon n="slot" /><span>Weitere</span><Caret /></Big>
          </Group>
          <Group w={74} label="Werkzeuge">
            <Big $w={74} $off>
              <Icon n="post" />
              <span>Post<WithCaret>Configurator<Caret /></WithCaret></span>
            </Big>
          </Group>
          <Group />
        </Ribbon>

        <SelectBar>
          <Tools $gap={6}>
            <button>☰ <span><u>M</u>enü</span> <Caret /></button>
            <Rule $h={14} />
            <Dropdown w={114} value="Volumenkörper" label="Typfilter" />
          </Tools>
          <Tools $gap={5} $l={6}>
            <button aria-label="Filter"><Icon n="funnel" /></button>
            <Dropdown w={120} value="Gesamte Baugruppe" label="Auswahlbereich" />
          </Tools>
          <Tools $gap={4} $l={5}>
            <button aria-label="Filter Optionen"><Icon n="funnel2" /><Caret /></button>
            <button aria-label="Fangen"><Icon n="snap" /></button>
            <button aria-label="Sechseck"><Icon n="hex" /></button>
            <button aria-label="Körper"><Icon n="cubeO" /></button>
            <button aria-label="Rechteck"><Icon n="rectO" /><Caret /></button>
          </Tools>
          <Tools $gap={4} $l={8}>
            <button aria-label="Würfel"><Icon n="cubeG" /></button>
            <button aria-label="Fläche"><Icon n="cubeR" /></button>
            <Rule $h={14} />
          </Tools>
          <Tools $gap={4} $l={8}>
            <button aria-label="MCS"><Lit $s={16}><Icon n="mcs" /></Lit></button>
            <button aria-label="Achsen"><Icon n="csEye" /></button>
            <button aria-label="Ausblenden"><Icon n="csOff" /></button>
            <Rule $h={14} />
          </Tools>
          <Push />
          <Caret />
        </SelectBar>

        <Work>
          <Rail>
            {rail.map((r) => (
              <RailButton key={r.n} $on={r.on} $gap={r.gap} $h={r.h} aria-label={r.n}>
                <Icon n={r.n} />
              </RailButton>
            ))}
          </Rail>

          <Navigator>
            <NavTitle>Teile-Navigator<Icon n="maxi" size={11} /></NavTitle>
            <TreeHead>Name<Caret dir="up" /></TreeHead>
            <Tree>
              <TreeRow $root>–<Ball /><Icon n="history" size={11} /><span>Modellhistorie</span></TreeRow>
              {tree.map((t) => (
                <TreeRow key={t.text} $off={t.off} $bold={t.bold}>
                  <Icon n={t.eye} size={11} />
                  <Icon n={t.icon} size={11} />
                  <span>{t.text}</span>
                </TreeRow>
              ))}
            </Tree>
            <HScroll><i /></HScroll>
            <Fold $line><Caret dir="right" tone={C.link} />Suchen</Fold>
            <Fold $line><Caret dir="right" tone={C.link} />Abhängigkeiten</Fold>
            <Fold><Caret tone={C.link} />Details</Fold>
            <DetailBox>
              <DetailFrame>
                <DetailTable>
                  <colgroup><col width="128" /><col width="76" /><col width="119" /><col /></colgroup>
                  <thead>
                    <tr><th>Parameter</th><th>Wert</th><th>Ausdruck<Caret dir="up" /></th><th /></tr>
                  </thead>
                </DetailTable>
              </DetailFrame>
            </DetailBox>
            <Fold $line><Caret dir="right" tone={C.link} />Vorschau</Fold>

            <Dialog>
              <DialogTitle>
                <Icon n="gear" />
                <h2>Teilegeometrie</h2>
                <button aria-label="Zurücksetzen"><Icon n="refresh" size={11} /></button>
                <button>?</button>
                <button aria-label="Schließen"><Icon n="close" size={11} /></button>
              </DialogTitle>
              <DialogBody $b={4}>
                <Fold $h={26} $pad={0}><Caret tone={C.link} />Geometrie</Fold>
                <Chosen>
                  <div><Icon n="tick" />Objekt auswählen (3)</div>
                  <ChosenEnd><SquareButton $s={18} $bg="#f9e873" aria-label="Objekt wählen"><Icon n="target" size={16} /></SquareButton></ChosenEnd>
                </Chosen>
                <Sub $boxed><Caret dir="right" tone={C.link} />Angepasste Daten</Sub>
                <Line $h={18}>
                  Neuen Satz hinzufügen
                  <SquareButton $s={16} $bg="#8cc3cf" $bd="#8cc3cf" aria-label="Hinzufügen"><Icon n="addRing" /></SquareButton>
                </Line>
                <ListBox>
                  <Sub><Caret tone={C.link} />Liste</Sub>
                  <ListRow>
                    <ListFrame>
                      <SetTable>
                        <colgroup><col width="42" /><col width="91" /><col /></colgroup>
                        <thead><tr><th>Satz</th><th>Anzahl der Eleme...</th><th>Angepasste</th></tr></thead>
                        <tbody><tr><td>1</td><td>3</td><td>Nein</td></tr></tbody>
                      </SetTable>
                      <i />
                    </ListFrame>
                    <SquareButton $s={16} aria-label="Entfernen"><Icon n="cross" /></SquareButton>
                  </ListRow>
                </ListBox>
              </DialogBody>
              <DialogBody $b={3}>
                <Fold $h={24} $pad={0}><Caret tone={C.link} />Topologie</Fold>
                <Line $h={26}>
                  Topologie
                  <SquareButton $s={21} aria-label="Topologie"><Icon n="topo" size={18} /></SquareButton>
                </Line>
              </DialogBody>
              <Expander><Caret dir="up" /></Expander>
              <Footer>
                <Action>OK</Action>
                <Action>Abbrechen</Action>
              </Footer>
            </Dialog>
          </Navigator>

          <Gutter>
            <Icon n="ghostA" />
            <Icon n="ghostB" />
            <Bottom><Caret dir="left" /></Bottom>
          </Gutter>

          <Graphics>
            <DocTabs>
              <DocTab $w={125}><Icon n="drawTab" />NX_Doku_DWG.prt<Icon n="mark" /></DocTab>
              <DocTab $w={127}><Icon n="partTab" />NX_Doku_Tisch6.prt<Icon n="mark" /></DocTab>
              <DocTab $w={123} $on><Icon n="path12" />NX_Doku_CAM.prt<Icon n="mark" /><Icon n="close" size={8} /></DocTab>
              <DocTab $w={118}><Icon n="partTab" />NX_Doku_Tisch5.prt</DocTab>
              <DocTab $w={118}><Icon n="partTab" />NX_Doku_Tisch4.prt</DocTab>
              <DocTab $w={118}><Icon n="partTab" />NX_Doku_Tisch3.prt</DocTab>
              <Push />
              <DocTab $w={19}>» 3</DocTab>
            </DocTabs>
            <Canvas>
              <Model />
              <FilterBar>
                <Dropdown w={120} h={17} value="Einzelfläche" label="Flächenregel" />
                <Dropdown w={120} h={17} value="Einzelne Kurve" label="Kurvenregel" />
                <Dropdown w={120} h={17} value="Einzelner Körper" label="Körperregel" />
                <More aria-label="Weitere Regeln">···</More>
                <Caret />
              </FilterBar>
              <Note $x={6} $y={50}>
                Teilegeometrie des Master<br />Workpieces mit allen relevanten,<br />signifikanten Teilen befüllen,<br />alle Fräsgeometrien müssen<br />enthalten sein
              </Note>
              <Note $x={363} $y={405} $big>
                Countertop 1-3 wären hier<br />ausreichend gewesen ;)
              </Note>
              <Chip $x={440} $y={162} aria-label="Körperfilter"><Icon n="bodyOrange" /><Caret tone="#7a5a2a" /></Chip>
              <Tip $x={440} $y={227}>
                <Icon n="bodyGrey" size={13} />
                <span>Einzelner Körper : Volumenkörper von<br />Countertop3</span>
              </Tip>
            </Canvas>
          </Graphics>
        </Work>

        <BottomBar>
          <Tools $gap={3}>
            <button aria-label="Messen"><Icon n="ruler" /></button>
            <Faded aria-label="Makro starten"><Icon n="rec" /></Faded>
            <Faded aria-label="Makro beenden"><Icon n="rec" /></Faded>
            <button aria-label="Aufzeichnen"><Icon n="rec" /></button>
            <button aria-label="Wiedergabe"><Icon n="rec" /></button>
            <Rule $h={11} />
          </Tools>
          <Push />
          <Caret />
        </BottomBar>
        <Status>
          <span>Teilegeometrie auswählen</span>
          <span>Volumenkörper ausgewählt - gesamt 3</span>
        </Status>
      </Shell>
      <Strip $h={6} />
    </Page>
  );
}
